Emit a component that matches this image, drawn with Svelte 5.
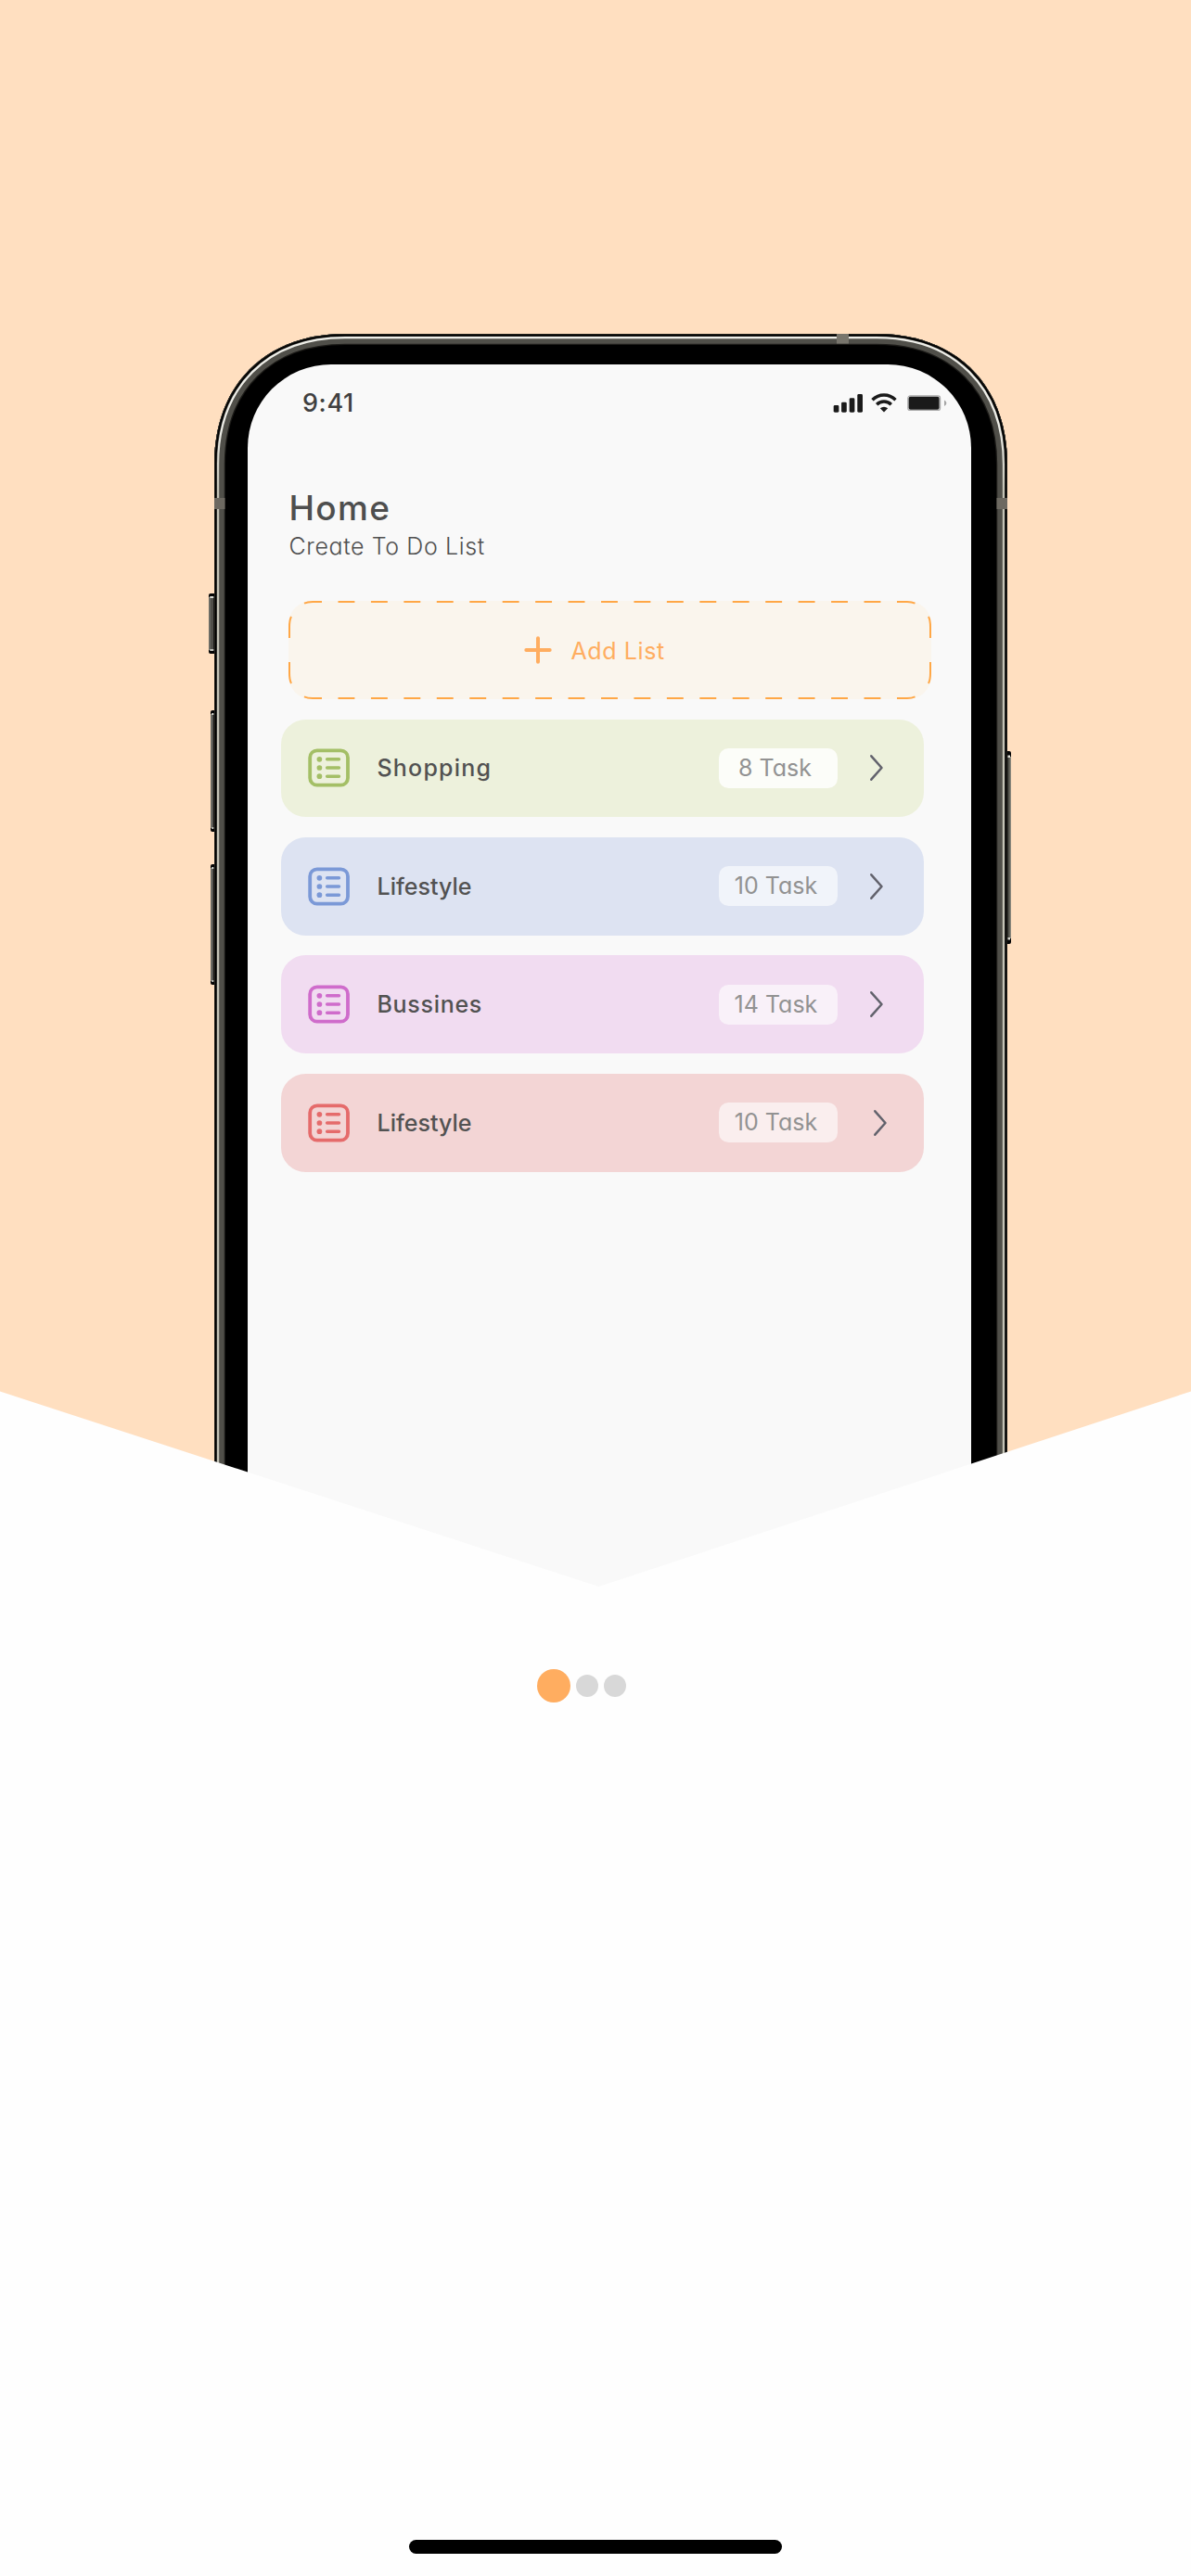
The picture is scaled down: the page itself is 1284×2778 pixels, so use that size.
<script>
  const lists = [
    { name: 'Shopping', count: '8 Task', tone: 'green' },
    { name: 'Lifestyle', count: '10 Task', tone: 'blue' },
    { name: 'Bussines', count: '14 Task', tone: 'pink' },
    { name: 'Lifestyle', count: '10 Task', tone: 'red' }
  ];

  const body =
    'M6 1400 V142 C6 56 61 1 147 1 H720 C806 1 861 56 861 142 V1400 Z';
  const leftButtons = [
    { x: 0, y: 281, w: 8, h: 65 },
    { x: 2, y: 407, w: 6, h: 131 },
    { x: 2, y: 573, w: 6, h: 130 }
  ];
</script>

<main class="page">
  <section class="hero">
    <div class="phone">
      <svg class="frame" width="866" height="1352" viewBox="0 0 866 1352" aria-hidden="true">
        <defs>
          <clipPath id="body-clip"><path d={body} /></clipPath>
          <linearGradient id="shine" x1="0" y1="0" x2="0" y2="170" gradientUnits="userSpaceOnUse">
            <stop offset="0" stop-color="#eeeee8" />
            <stop offset="0.6" stop-color="#eeeee8" />
            <stop offset="1" stop-color="#c4c3b6" />
          </linearGradient>
        </defs>
        {#each leftButtons as b}
          <rect x={b.x} y={b.y} width={b.w} height={b.h} rx="2" fill="#050505" />
          <rect x={b.x + 0.2} y={b.y + 4} width="1.6" height={b.h - 8} fill="#8a8a80" />
          <rect x={b.x + 1.8} y={b.y + 4} width={b.w - 4.5} height={b.h - 8} fill="#504f4a" />
          <rect x={b.x + 1.3} y={b.y + 3} width={b.w - 4} height="2" fill="#dcdcd4" />
          <rect x={b.x + 1.3} y={b.y + b.h - 5} width={b.w - 4} height="2" fill="#c4c4bc" />
        {/each}
        <rect x="859" y="451" width="6" height="208" rx="2" fill="#050505" />
        <rect x="861.5" y="457" width="2.2" height="196" fill="#55544e" />
        <rect x="863.5" y="457" width="1.5" height="196" fill="#8c8a7f" />
        <rect x="861.5" y="455.5" width="2.5" height="2.5" fill="#e4e4dc" />
        <rect x="861.5" y="652" width="2.5" height="2.5" fill="#d8d8d0" />

        <path d={body} fill="#000" />
        <g clip-path="url(#body-clip)" fill="none">
          <path d={body} stroke="#1c1b18" stroke-width="24" />
          <path d={body} stroke="#504f49" stroke-width="21.5" />
          <path d={body} stroke="url(#shine)" stroke-width="10.4" />
          <path d={body} stroke="#4a4944" stroke-width="6" />
          <path d={body} stroke="#000" stroke-width="4.8" />
          <path d={body} stroke="#2e2c24" stroke-width="1.5" />
        </g>
        <rect x="677" y="1" width="13" height="10.5" fill="#78756c" />
        <rect x="6" y="178" width="11.5" height="12" fill="#6d6961" />
        <rect x="849.5" y="178" width="11.5" height="12" fill="#6d6961" />
      </svg>

      <div class="screen">
        <div class="status">
          <span class="time">9:41</span>
          <svg width="123" height="23" viewBox="0 0 123 23" aria-hidden="true">
            <g fill="#1a1a1a">
              <rect x="0.7" y="14" width="5.7" height="7.7" rx="1.4" />
              <rect x="9.1" y="10.7" width="5.7" height="11" rx="1.4" />
              <rect x="17.7" y="6.3" width="5.7" height="15.4" rx="1.4" />
              <rect x="26.3" y="2" width="5.7" height="19.7" rx="1.4" />
              <path d="M55 21.4 L50.8 17.3 Q55 14.2 59.2 17.3 Z" />
            </g>
            <g fill="none" stroke="#1a1a1a" stroke-width="3.4">
              <path d="M42.5 8.2 C49.5 1.2 60.5 1.2 67.5 8.2" />
              <path d="M47.2 13.2 C51.5 8.9 58.5 8.9 62.8 13.2" />
            </g>
            <rect x="80.8" y="3.8" width="34.8" height="15.7" rx="2.6" fill="none" stroke="#a8a8a8" stroke-width="1.2" />
            <rect x="81.6" y="4.7" width="33" height="14" rx="2" fill="#1a1a1a" />
            <path d="M120 8.6 Q122.4 9.8 122.4 11.8 Q122.4 13.8 120 15 Z" fill="#a6a6a6" />
          </svg>
        </div>

        <header>
          <h1>Home</h1>
          <p>Create To Do List</p>
        </header>

        <button class="add">
          <svg class="dashes" width="693" height="106" viewBox="0 0 693 106" aria-hidden="true">
            <rect x="0" y="0" width="693" height="106" rx="25" fill="#faf5ed" />
            <g fill="none" stroke="#ffa746" stroke-width="2">
              <path d="M53.5 1 H639 M53.5 105 H639" stroke-dasharray="17.9 17.54" />
              <path d="M17 2.6 Q20.5 1 26 1 H36 M656 1 H667 Q672 1 675.5 2.6" />
              <path d="M17 103.4 Q20.5 105 26 105 H36 M656 105 H667 Q672 105 675.5 103.4" />
              <path d="M3 17 Q1 21 1 28 V40 M1 66 V78 Q1 85 3 89" />
              <path d="M690 17 Q692 21 692 28 V40 M692 66 V78 Q692 85 690 89" />
            </g>
          </svg>
          <span class="add-label">
            <svg width="30" height="30" viewBox="0 0 30 30" aria-hidden="true">
              <path d="M15 2.3 V27.7 M2.3 15 H27.7" stroke="#ffad60" stroke-width="4" stroke-linecap="round" />
            </svg>
            <span>Add List</span>
          </span>
        </button>

        <ul>
          {#each lists as list, i}
            <li class={list.tone}>
              <svg class="icon" width="45" height="42" viewBox="0 0 45 42" aria-hidden="true">
                <rect x="2.2" y="2.3" width="40.8" height="37.4" rx="7.6" fill="none" stroke="currentColor" stroke-width="3.8" />
                <g fill="currentColor">
                  <circle cx="12.4" cy="11.8" r="2.85" />
                  <circle cx="12.4" cy="21" r="2.85" />
                  <circle cx="12.4" cy="30.2" r="2.85" />
                </g>
                <path d="M20.6 11.8 H33.5 M20.6 21 H33.5 M20.6 30.2 H33.5" stroke="currentColor" stroke-width="3.4" stroke-linecap="round" />
              </svg>
              <span class="name">{list.name}</span>
              <span class="pill">{list.count}</span>
              <svg class="chevron" class:last={i === lists.length - 1} width="16" height="30" viewBox="0 0 16 30" aria-hidden="true">
                <path d="M2.3 2.3 L13.5 15 L2.3 27.7" fill="none" stroke="#62626c" stroke-width="2.5" stroke-linecap="round" stroke-linejoin="round" />
              </svg>
            </li>
          {/each}
        </ul>
      </div>
    </div>
    <div class="wedge"></div>
  </section>

  <div class="pager">
    <span class="active"></span>
    <span></span>
    <span></span>
  </div>

  <div class="home-bar"></div>
</main>

<style>
  :global(body) {
    margin: 0;
    background: #fefefe;
  }
  .page {
    width: 1284px;
    height: 2778px;
    display: flex;
    flex-direction: column;
    background: #fefefe;
    font-family: Inter, 'Open Sans', sans-serif;
    font-feature-settings: 'cv11' 1;
    overflow: hidden;
  }
  .hero {
    display: grid;
    flex: none;
    height: 1711px;
    background: #ffdfc0;
    overflow: hidden;
  }
  .phone {
    grid-area: 1 / 1;
    display: grid;
    width: 866px;
    height: 1352px;
    margin: 359px 0 0 225px;
  }
  .wedge {
    grid-area: 1 / 1;
    align-self: end;
    height: 211px;
    background: #fefefe;
    clip-path: polygon(0 0.5px, 645.5px 211px, 100% 0.5px, 100% 100%, 0 100%);
  }
  .frame,
  .screen {
    grid-area: 1 / 1;
  }
  .screen {
    box-sizing: border-box;
    width: 780px;
    height: 1318px;
    margin: 34px 0 0 42px;
    padding-top: 30px;
    border-radius: 90px 90px 0 0;
    background: #f9f9f9;
  }
  .status {
    display: flex;
    justify-content: space-between;
    align-items: center;
    height: 23px;
    padding: 0 26px 0 59px;
  }
  .time {
    font-size: 27px;
    line-height: 23px;
    font-weight: 550;
    letter-spacing: 0.6px;
    color: #404040;
  }
  header {
    padding: 81px 0 0 44.5px;
  }
  h1 {
    margin: 0;
    font-size: 37px;
    line-height: 41px;
    font-weight: 500;
    letter-spacing: 1.3px;
    color: #4e4e4e;
  }
  p {
    margin: 6px 0 0;
    font-size: 25px;
    line-height: 31px;
    font-weight: 300;
    letter-spacing: 0.6px;
    color: #505050;
  }
  .add {
    display: grid;
    width: 693px;
    height: 106px;
    margin: 43px 0 0 43.5px;
    padding: 0;
    border: 0;
    background: none;
    font: inherit;
    font-feature-settings: inherit;
    color: #ffad60;
  }
  .dashes,
  .add-label {
    grid-area: 1 / 1;
  }
  .add-label {
    display: flex;
    align-items: center;
    gap: 21px;
    padding-left: 254px;
    font-size: 25px;
    line-height: 30px;
    letter-spacing: 0.6px;
    white-space: nowrap;
  }
  .add-label span {
    padding-top: 2px;
  }
  ul {
    display: flex;
    flex-direction: column;
    gap: 21.7px;
    margin: 21.5px 0 0 36px;
    padding: 0;
    list-style: none;
  }
  li {
    box-sizing: border-box;
    display: flex;
    align-items: center;
    width: 693px;
    height: 105.8px;
    padding-left: 28.5px;
    border-radius: 26.5px;
  }
  .icon {
    flex: none;
  }
  .name {
    box-sizing: border-box;
    flex: none;
    width: 398.7px;
    padding-left: 30px;
    font-size: 25px;
    line-height: 30px;
    font-weight: 500;
    color: #525252;
  }
  .pill {
    box-sizing: border-box;
    flex: none;
    width: 127.5px;
    height: 43px;
    padding-right: 5px;
    border-radius: 10.5px;
    background: rgba(255, 255, 255, 0.6);
    text-align: center;
    font-size: 25px;
    line-height: 43px;
    color: #929292;
  }
  .chevron {
    margin-left: 34px;
  }
  .chevron.last {
    margin-left: 38px;
  }
  .green {
    background: #edf1dc;
    color: #a4bf66;
  }
  .green .name {
    letter-spacing: 1.2px;
  }
  .green .pill {
    padding-right: 7px;
    background: #fcfdf9;
  }
  .blue {
    background: #dde3f2;
    color: #7b99d7;
  }
  .pink {
    background: #f1dcf1;
    color: #cf6ccb;
  }
  .pink .name {
    letter-spacing: 0.7px;
  }
  .red {
    background: #f3d5d5;
    color: #e56b6b;
  }
  .pager {
    display: flex;
    align-items: center;
    gap: 6px;
    margin: 89px 0 0 579px;
  }
  .pager span {
    width: 24px;
    height: 24px;
    border-radius: 50%;
    background: #d8d8d8;
  }
  .pager .active {
    width: 36px;
    height: 36px;
    background: #ffad60;
  }
  .home-bar {
    width: 402px;
    height: 15px;
    margin: auto auto 24px 441px;
    border-radius: 7.5px;
    background: #000;
  }
</style>
